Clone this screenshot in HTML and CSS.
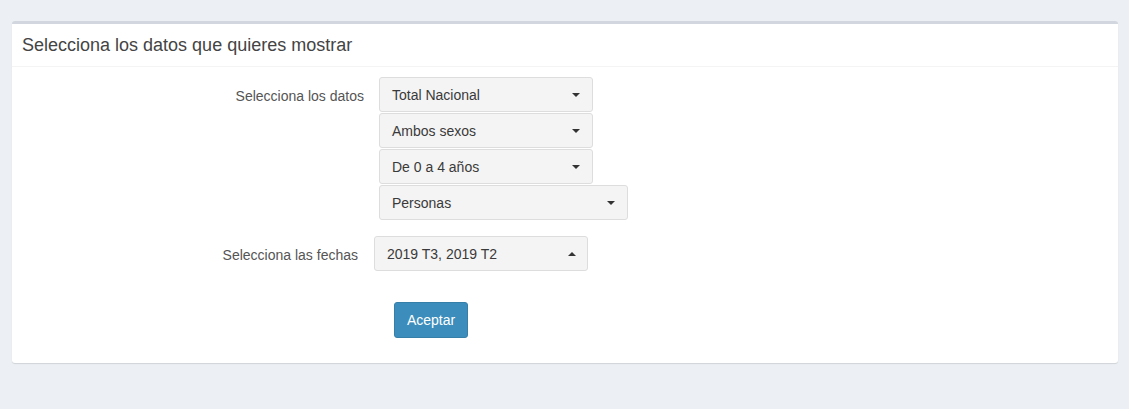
FILE: index.html
```html
<!DOCTYPE html>
<html lang="es">
<head>
<meta charset="utf-8">
<title>Selecciona los datos</title>
<link rel="stylesheet" href="styles.css">
</head>
<body>
<div class="box">
  <div class="box-header">
    <h3 class="box-title">Selecciona los datos que quieres mostrar</h3>
  </div>
  <div class="box-body">
    <div class="row row-datos">
      <label class="row-label">Selecciona los datos</label>
      <div class="selects">
        <button class="select"><span>Total Nacional</span><i class="caret"></i></button>
        <button class="select"><span>Ambos sexos</span><i class="caret"></i></button>
        <button class="select"><span>De 0 a 4 años</span><i class="caret"></i></button>
        <button class="select select-wide"><span>Personas</span><i class="caret"></i></button>
      </div>
    </div>
    <div class="row row-fechas">
      <label class="row-label">Selecciona las fechas</label>
      <div class="selects">
        <button class="select select-date"><span>2019 T3, 2019 T2</span><i class="caret caret-up"></i></button>
      </div>
    </div>
    <div class="actions">
      <button class="btn-primary">Aceptar</button>
    </div>
  </div>
</div>
</body>
</html>
```
FILE: styles.css
```css
* { box-sizing: border-box; }
html, body { margin: 0; padding: 0; }
body {
  background: #ecf0f5;
  font-family: "Liberation Sans", Arial, sans-serif;
  font-size: 14px;
  color: #333;
  padding: 21px 11px 0 12px;
  height: 409px;
}
.box {
  background: #fff;
  border-top: 3px solid #d2d6de;
  border-radius: 3px;
  box-shadow: 0 1px 1px rgba(0,0,0,0.12);
  height: 342px;
}
.box-header {
  height: 43px;
  border-bottom: 1px solid #f4f4f4;
  padding: 0 10px;
  display: flex;
  align-items: center;
}
.box-title {
  margin: 0;
  font-size: 18px;
  font-weight: normal;
  color: #444;
  line-height: 1.1;
  padding-top: 1px;
}
.box-body {
  padding: 10px 10px;
}
.row {
  display: flex;
  align-items: flex-start;
}
.row-label {
  text-align: right;
  color: #555;
  line-height: 35px;
  padding-top: 2px;
  font-size: 14px;
}
.row-datos .row-label { width: 342px; margin-right: 15px; }
.row-fechas { margin-top: 15px; }
.row-fechas .row-label { width: 336px; margin-right: 16px; }
.selects {
  display: flex;
  flex-direction: column;
  align-items: flex-start;
}
.select {
  position: relative;
  width: 214px;
  height: 35px;
  margin: 0 0 1px 0;
  padding: 0 12px 0 12px;
  background: #f4f4f4;
  border: 1px solid #ddd;
  border-radius: 3px;
  font-family: inherit;
  font-size: 14px;
  color: #3a3a3a;
  text-align: left;
  display: flex;
  align-items: center;
  justify-content: space-between;
}
.select-wide { width: 249px; }
.select-date { width: 214px; padding-left: 12px; }
.caret {
  display: inline-block;
  width: 0;
  height: 0;
  border-top: 4px solid #333;
  border-left: 4px solid transparent;
  border-right: 4px solid transparent;
}
.caret-up {
  border-top: 0;
  border-bottom: 4px solid #333;
  margin-right: -1px;
}
.actions {
  margin-top: 29px;
  padding-left: 372px;
}
.btn-primary {
  width: 74px;
  height: 36px;
  background: #3c8dbc;
  border: 1px solid #367fa9;
  border-radius: 3px;
  color: #fff;
  font-family: inherit;
  font-size: 14px;
  padding: 0;
}
```
